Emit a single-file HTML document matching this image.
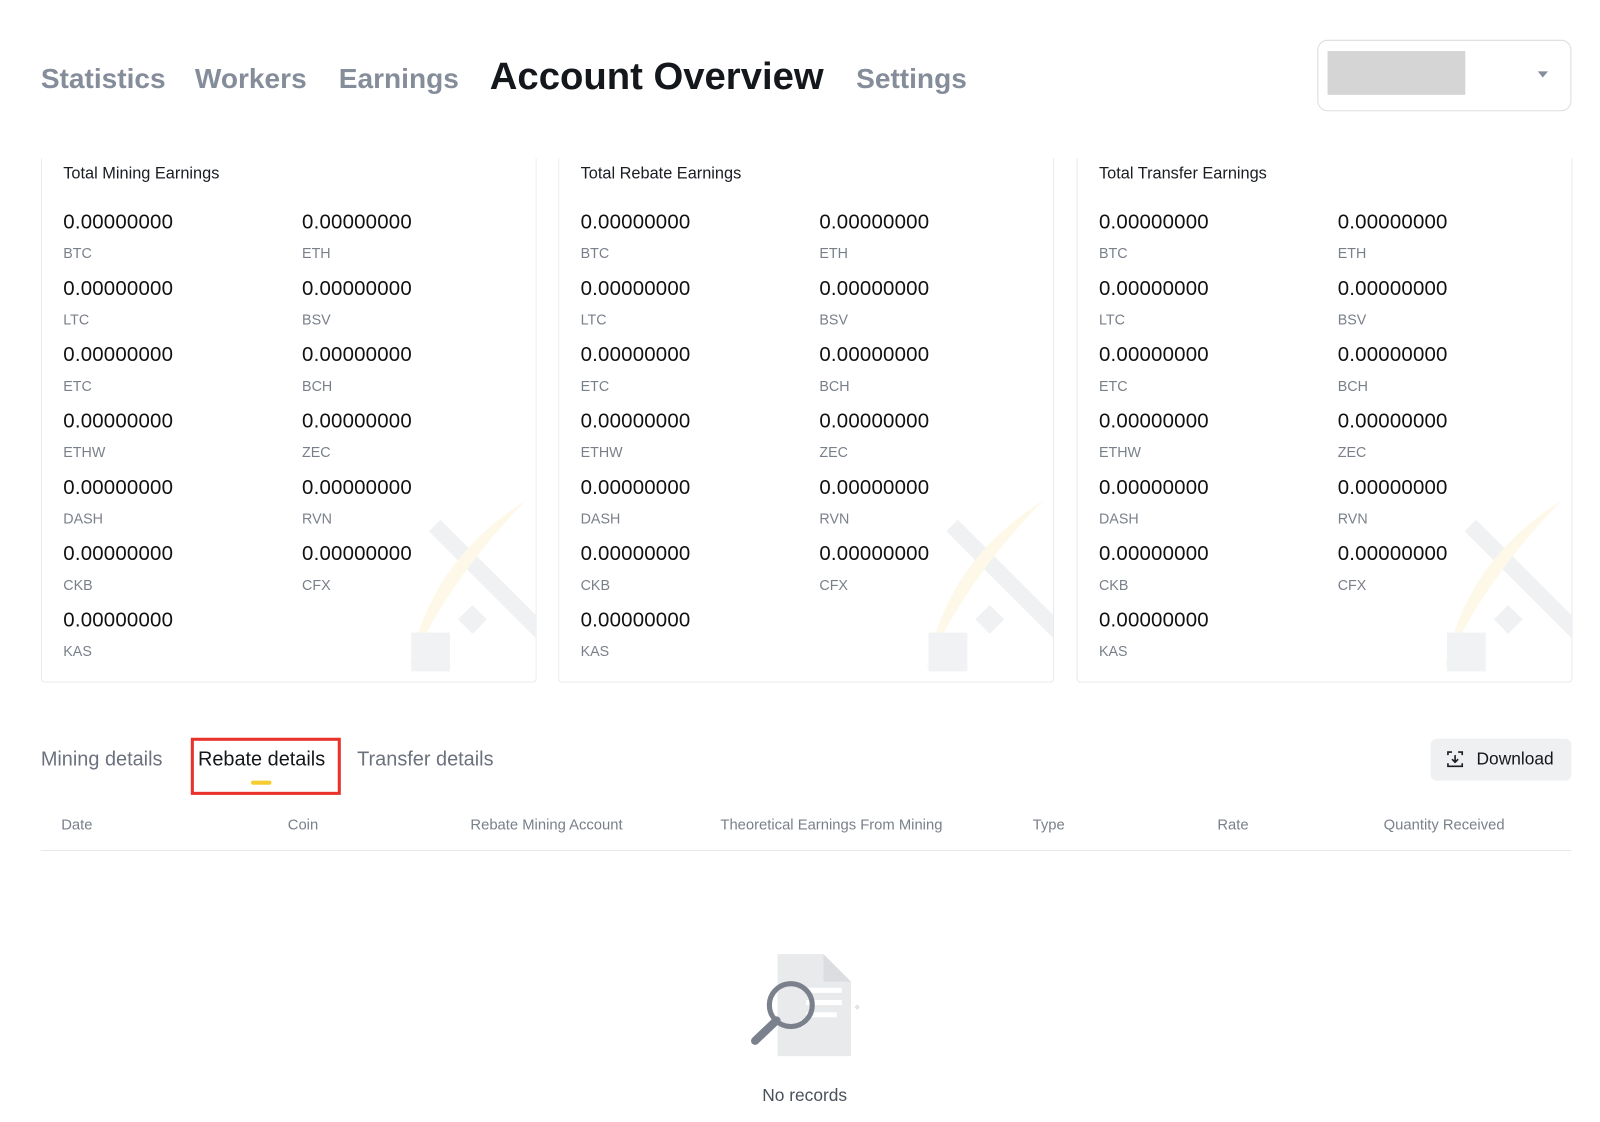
<!DOCTYPE html>
<html><head><meta charset="utf-8"><style>
*{margin:0;padding:0;box-sizing:border-box}
body{width:1600px;height:1121px;background:#fff;font-family:"Liberation Sans",sans-serif;position:relative;overflow:hidden;color:#1a1d23}
#w{position:absolute;left:0;top:0;width:1568px;height:1100px;transform:scale(1.0204);transform-origin:0 0}
.a{position:absolute;white-space:nowrap}
.nav{font-weight:bold;font-size:27.5px;color:#858d9b;top:61px}
.card{position:absolute;top:155px;width:486px;height:514px;border:1px solid #e6e8eb;border-top:none;border-radius:0 0 4px 4px;overflow:hidden}
.card h4{position:absolute;left:21px;top:7px;font-weight:normal;font-size:16px;color:#1a1d23}
.v{position:absolute;font-size:20px;color:#111;letter-spacing:0.2px}
.l{position:absolute;font-size:14px;color:#7a808a}
.th{position:absolute;top:801px;font-size:14.5px;color:#7a808a}
</style></head><body><div id="w">
<div class="a nav" style="left:40px">Statistics</div>
<div class="a nav" style="left:191px">Workers</div>
<div class="a nav" style="left:332px">Earnings</div>
<div class="a" style="left:480px;top:53px;font-weight:bold;font-size:37.5px;color:#14171c">Account Overview</div>
<div class="a nav" style="left:839px">Settings</div>
<div class="a" style="left:1291px;top:39px;width:249px;height:70px;border:1px solid #dcdde0;border-radius:10px"></div>
<div class="a" style="left:1301px;top:50px;width:135px;height:43px;background:#d5d5d5"></div>
<div class="a" style="left:1507px;top:70px;width:0;height:0;border-left:5px solid transparent;border-right:5px solid transparent;border-top:6px solid #858d9b"></div>

<div id="cards"></div>

<div class="a" style="left:40px;top:733px;font-size:19.5px;color:#6b727d">Mining details</div>
<div class="a" style="left:187px;top:723px;width:147px;height:56px;border:3px solid #e8322b"></div>
<div class="a" style="left:194px;top:733px;font-size:19.5px;color:#14171c">Rebate details</div>
<div class="a" style="left:246px;top:765px;width:20px;height:4px;background:#f5cd2e;border-radius:2px"></div>
<div class="a" style="left:350px;top:733px;font-size:19.5px;color:#6b727d">Transfer details</div>
<div class="a" style="left:1402px;top:724px;width:138px;height:41px;background:#eef0f2;border-radius:6px"></div>
<svg class="a" style="left:1416px;top:734px" width="20" height="20" viewBox="0 0 20 20" fill="none" stroke="#1a1d23" stroke-width="1.6"><path d="M3 6V3h4M13 3h4v3M3 14v3h14v-3"/><path d="M10 6v7M7 10l3 3 3-3"/></svg>
<div class="a" style="left:1447px;top:734px;font-size:17px;color:#14171c">Download</div>

<div class="th" style="left:60px">Date</div>
<div class="th" style="left:282px">Coin</div>
<div class="th" style="left:461px">Rebate Mining Account</div>
<div class="th" style="left:706px">Theoretical Earnings From Mining</div>
<div class="th" style="left:1012px">Type</div>
<div class="th" style="left:1193px">Rate</div>
<div class="th" style="left:1356px">Quantity Received</div>
<div class="a" style="left:40px;top:833px;width:1500px;height:1px;background:#e6e8eb"></div>

<svg class="a" style="left:730px;top:930px" width="120" height="110" viewBox="0 0 120 110">
<path d="M32 5h45l27 27v73H32z" fill="#e9eaec"/>
<path d="M77 5v27h27z" fill="#dcdde0"/>
<rect x="60" y="38" width="35" height="5" fill="#fff"/><rect x="60" y="50" width="35" height="5" fill="#fff"/><rect x="60" y="62" width="30" height="5" fill="#fff"/>
<rect x="53" y="70" width="6" height="6" fill="#fff" transform="rotate(45 56 73)"/>
<rect x="108" y="55" width="4" height="4" fill="#e4e5e7" transform="rotate(45 110 57)"/>
<circle cx="45" cy="55" r="21" fill="none" stroke="#7a818c" stroke-width="5"/>
<path d="M31 70L10 90" stroke="#7a818c" stroke-width="8" stroke-linecap="round"/>
</svg>
<div class="a" style="left:747px;top:1064px;font-size:17px;color:#4a505a">No records</div>
</div>
<script>
var titles=["Total Mining Earnings","Total Rebate Earnings","Total Transfer Earnings"];
var coins=["BTC","ETH","LTC","BSV","ETC","BCH","ETHW","ZEC","DASH","RVN","CKB","CFX","KAS"];
var lefts=[40,547,1055],h="";
for(var c=0;c<3;c++){
 h+='<div class="card" style="left:'+lefts[c]+'px"><h4>'+titles[c]+'</h4>';
 h+='<svg style="position:absolute;left:360px;top:330px" width="130" height="180" viewBox="0 0 130 180"><path d="M25 30L130 135" stroke="#f0f1f3" stroke-width="16"/><path d="M0 170C15 90 60 40 115 5C80 40 30 100 0 170z" fill="#fdf8e8"/><rect x="52" y="112" width="20" height="20" fill="#f0f1f3" transform="rotate(45 62 122)"/><rect x="2" y="135" width="38" height="38" fill="#f1f2f4"/></svg>';
 for(var i=0;i<13;i++){
  var x=i%2?255:21, y=52+Math.floor(i/2)*65;
  h+='<div class="v" style="left:'+x+'px;top:'+y+'px">0.00000000</div><div class="l" style="left:'+x+'px;top:'+(y+33)+'px">'+coins[i]+'</div>';
 }
 h+='</div>';
}
document.getElementById("cards").innerHTML=h;
</script>
</body></html>
